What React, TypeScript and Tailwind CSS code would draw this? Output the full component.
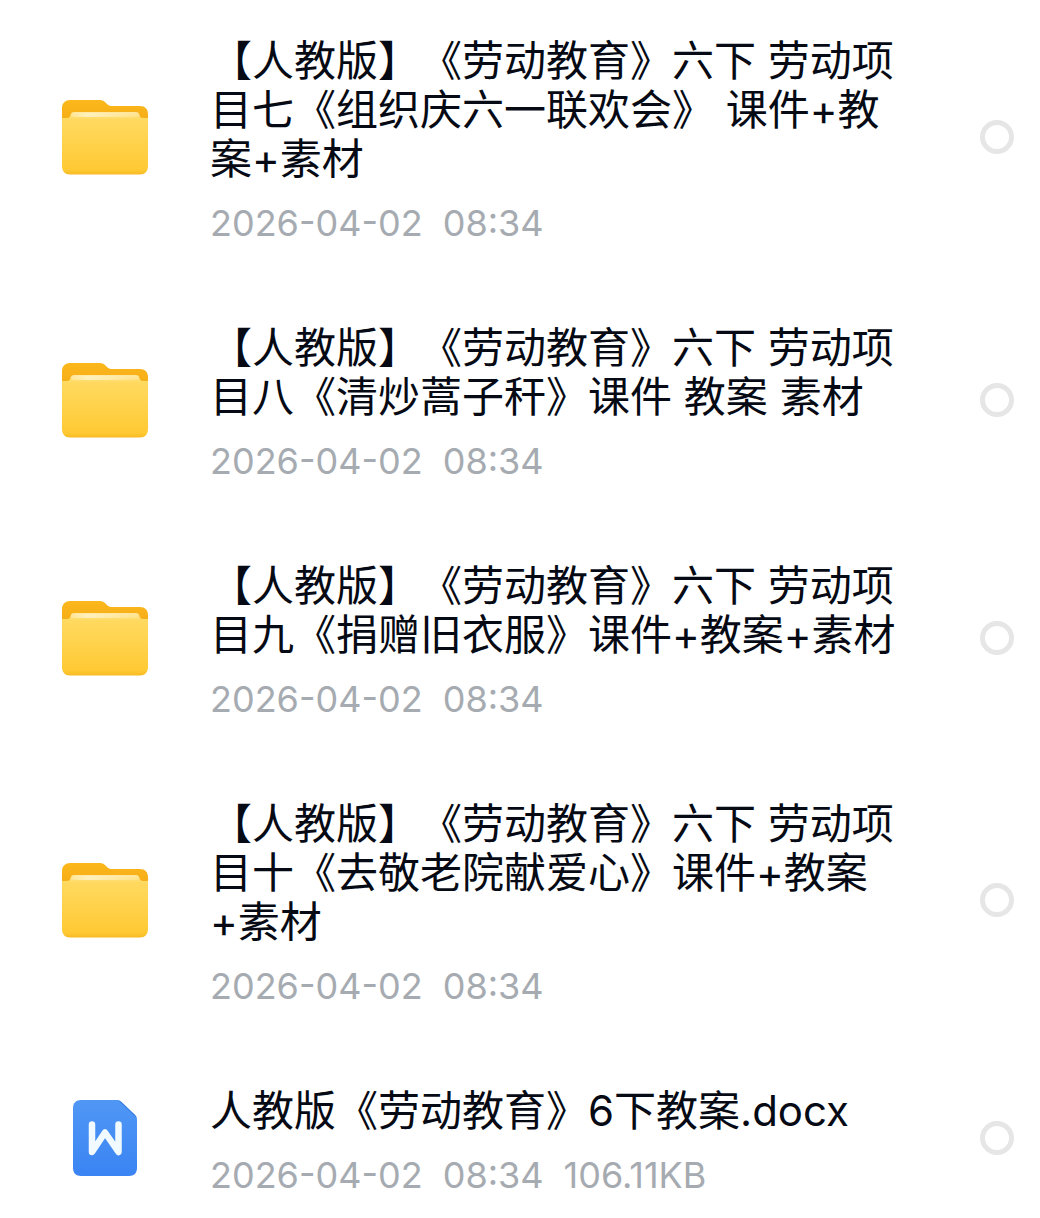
import { ReactNode } from 'react'

type FileItem = {
  id: string
  kind: 'folder' | 'doc'
  name: string
  date: string
  time: string
  size?: string
}

const files: FileItem[] = [
  {
    id: 'file-7',
    kind: 'folder',
    name: '【人教版】《劳动教育》六下 劳动项目七《组织庆六一联欢会》 课件+教案+素材',
    date: '2026-04-02',
    time: '08:34',
  },
  {
    id: 'file-8',
    kind: 'folder',
    name: '【人教版】《劳动教育》六下 劳动项目八《清炒蒿子秆》课件 教案 素材',
    date: '2026-04-02',
    time: '08:34',
  },
  {
    id: 'file-9',
    kind: 'folder',
    name: '【人教版】《劳动教育》六下 劳动项目九《捐赠旧衣服》课件+教案+素材',
    date: '2026-04-02',
    time: '08:34',
  },
  {
    id: 'file-10',
    kind: 'folder',
    name: '【人教版】《劳动教育》六下 劳动项目十《去敬老院献爱心》课件+教案+素材',
    date: '2026-04-02',
    time: '08:34',
  },
  {
    id: 'file-docx',
    kind: 'doc',
    name: '人教版《劳动教育》6下教案.docx',
    date: '2026-04-02',
    time: '08:34',
    size: '106.11KB',
  },
]

export default function App() {
  return (
    <main
      lang="zh-CN"
      className="min-h-screen bg-white font-['Inter','Noto_Sans_CJK_SC',sans-serif] [text-spacing-trim:space-all]"
    >
      <ul className="flex flex-col gap-[85px] pt-9 pb-6">
        {files.map((file) => (
          <Row
            key={file.id}
            file={file}
            icon={file.kind === 'folder' ? <FolderIcon /> : <DocIcon />}
          />
        ))}
      </ul>
    </main>
  )
}

type RowProps = {
  file: FileItem
  icon: ReactNode
}

const Row: React.FC<RowProps> = ({ file, icon }) => (
  <li className="flex items-center pl-[62px] pr-[26px]">
    <div className="flex w-[86px] shrink-0 justify-center">{icon}</div>

    <div className="ml-[62px] mr-[76px] min-w-0 flex-1">
      <label htmlFor={file.id} className="block text-[42px] leading-[49px] text-[#060a14]">
        {file.name}
      </label>
      <div className="mt-[25px] flex gap-5 text-[36px] leading-[30px] text-[#a6abb1]">
        <span>{file.date}</span>
        <span>{file.time}</span>
        {file.size && <span>{file.size}</span>}
      </div>
    </div>

    <input
      id={file.id}
      type="checkbox"
      className="size-[34px] shrink-0 cursor-pointer appearance-none rounded-full border-[5px] border-[#e6e6e6] checked:border-blue-500"
    />
  </li>
)

const FolderIcon: React.FC = () => (
  <svg width="86" height="76" viewBox="0 0 86 76" fill="none" aria-hidden="true">
    <defs>
      <linearGradient id="folder-back" x1="0" y1="0" x2="0" y2="24" gradientUnits="userSpaceOnUse">
        <stop stopColor="#fcb81c" />
        <stop offset="1" stopColor="#f5ac17" />
      </linearGradient>
      <linearGradient id="folder-front" x1="0" y1="13" x2="0" y2="76" gradientUnits="userSpaceOnUse">
        <stop stopColor="#ffe596" />
        <stop offset="0.12" stopColor="#ffd95f" />
        <stop offset="0.5" stopColor="#ffd24b" />
        <stop offset="0.92" stopColor="#ffc933" />
        <stop offset="1" stopColor="#f6b820" />
      </linearGradient>
      <linearGradient id="folder-shine" x1="8" y1="0" x2="78" y2="0" gradientUnits="userSpaceOnUse">
        <stop stopColor="#fff0bd" stopOpacity="0.3" />
        <stop offset="0.25" stopColor="#fff0bd" />
        <stop offset="1" stopColor="#fff0bd" stopOpacity="0.2" />
      </linearGradient>
    </defs>
    <path
      d="M0 9C0 4 3.500 1 8 1H38C40.500 1 42 2 43.500 3.500L45 5C46.500 6.500 48 7 50 7H78C83 7 86 10 86 15V30H0Z"
      fill="url(#folder-back)"
    />
    <path
      d="M0 19H5C7.500 19 8 18 8.500 16C9 14 10 13 12.500 13H73.500C76 13 77 14 77.500 16C78 18 78.500 19 81 19H86V67C86 72 83 75.500 78 75.500H8C3 75.500 0 72 0 67Z"
      fill="url(#folder-front)"
    />
    <rect x="9" y="13.500" width="68" height="4.500" rx="2.200" fill="url(#folder-shine)" />
  </svg>
)

const DocIcon: React.FC = () => (
  <svg width="64" height="76" viewBox="0 0 64 76" fill="none" aria-hidden="true">
    <defs>
      <linearGradient id="doc-body" x1="0" y1="0" x2="0" y2="76" gradientUnits="userSpaceOnUse">
        <stop stopColor="#5097f5" />
        <stop offset="1" stopColor="#3a84f3" />
      </linearGradient>
    </defs>
    <path
      d="M8 0H43C45.500 0 47 .6 48.700 2.200L61.500 14.500C63.200 16.200 64 17.800 64 20V68C64 73 61 76 56 76H8C3 76 0 73 0 68V8C0 3 3 0 8 0Z"
      fill="url(#doc-body)"
    />
    <path d="M45 .3C46.500 .6 47.500 1.200 48.700 2.200L61.500 14.500C62.800 15.800 63.500 16.800 63.800 18.200Z" fill="#3b7fe0" />
    <path
      d="M19 24.500V52L32 32.500L45.500 52V24.500"
      stroke="#f1fbff"
      strokeWidth="6.500"
      strokeLinecap="round"
      strokeLinejoin="round"
    />
  </svg>
)
